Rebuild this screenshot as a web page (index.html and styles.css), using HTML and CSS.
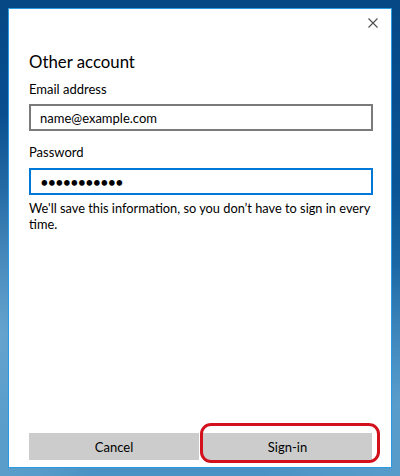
FILE: index.html
```html
<!DOCTYPE html>
<html lang="en">
<head>
    <meta charset="UTF-8">
    <title>Other account</title>
    <link rel="stylesheet" href="styles.css">
</head>
<body>
    <div class="dialog">
        <div class="title-bar">
            <button class="close-btn" aria-label="Close">
                <svg width="10" height="10" viewBox="0 0 10 10">
                    <path d="M0.5 0.5 L9.5 9.5 M9.5 0.5 L0.5 9.5" stroke="#4d4d4d" stroke-width="1.1" fill="none"/>
                </svg>
            </button>
        </div>

        <div class="content">
            <h1 class="title">Other account</h1>

            <label class="field-label" for="email">Email address</label>
            <input class="field" id="email" type="text" value="name@example.com">

            <label class="field-label" for="password">Password</label>
            <input class="field focused" id="password" type="password" value="secretpass1">

            <p class="note">We'll save this information, so you don’t have to sign in every time.</p>
        </div>

        <div class="actions">
            <button class="btn">Cancel</button>
            <div class="highlight-wrap">
                <button class="btn">Sign-in</button>
                <span class="highlight"></span>
            </div>
        </div>
    </div>
</body>
</html>
```

FILE: styles.css
```css
html, body {
    height: 100%;
}

body {
    margin: 0;
    padding: 8px;
    box-sizing: border-box;
    font-family: Lato, 'Open Sans', sans-serif;
    color: #000000;
    background:
        radial-gradient(ellipse 120px 220px at 0% 70%, rgba(150, 200, 230, 0.55), rgba(150, 200, 230, 0) 100%),
        radial-gradient(ellipse 160px 140px at 100% 85%, rgba(120, 180, 220, 0.5), rgba(120, 180, 220, 0) 100%),
        linear-gradient(180deg, #064785 0%, #0a5596 40%, #2f7db6 75%, #4b93c4 100%);
}

.dialog {
    width: 384px;
    height: 460px;
    box-sizing: border-box;
    background: #ffffff;
    border: 1px solid #2a9be0;
    display: flex;
    flex-direction: column;
}

.title-bar {
    display: flex;
    justify-content: flex-end;
    height: 28px;
}

.close-btn {
    width: 30px;
    height: 28px;
    margin-right: 3px;
    border: none;
    background: transparent;
    padding: 0;
    display: flex;
    align-items: center;
    justify-content: center;
    cursor: pointer;
}

.content {
    padding: 0 18px 0 20px;
}

.title {
    margin: 12px 0 0 0;
    font-size: 16.8px;
    font-weight: 400;
    line-height: 26px;
}

.field-label {
    display: block;
    font-size: 13px;
    line-height: 20px;
    margin-top: 4px;
}

.field {
    display: block;
    width: 100%;
    height: 27px;
    box-sizing: border-box;
    margin-top: 5px;
    padding: 0 9px;
    border: 2px solid #7a7a7a;
    font-family: Lato, 'Open Sans', sans-serif;
    font-size: 13px;
    color: #000000;
    outline: none;
}

.field + .field-label {
    margin-top: 11px;
}

.field.focused {
    height: 27px;
    margin-top: 6px;
    border-color: #0078d7;
    font-size: 15px;
    letter-spacing: -1.2px;
    padding-left: 9px;
}

.note {
    margin: 5px -4px 0 0;
    font-size: 12.8px;
    line-height: 16px;
}

.actions {
    margin-top: auto;
    display: flex;
    gap: 4px;
    padding: 0 0 7px 20px;
}

.btn {
    width: 170px;
    height: 27px;
    border: none;
    padding: 0;
    background: #cccccc;
    font-family: Lato, 'Open Sans', sans-serif;
    font-size: 13px;
    color: #000000;
    cursor: pointer;
}

.highlight-wrap {
    display: flex;
    position: relative;
}

.highlight-wrap .btn {
    width: 169px;
}

.highlight {
    position: absolute;
    left: -3px;
    right: -8px;
    top: -10px;
    bottom: -3px;
    border: 3px solid #d2111d;
    border-radius: 11px;
    pointer-events: none;
}
```
